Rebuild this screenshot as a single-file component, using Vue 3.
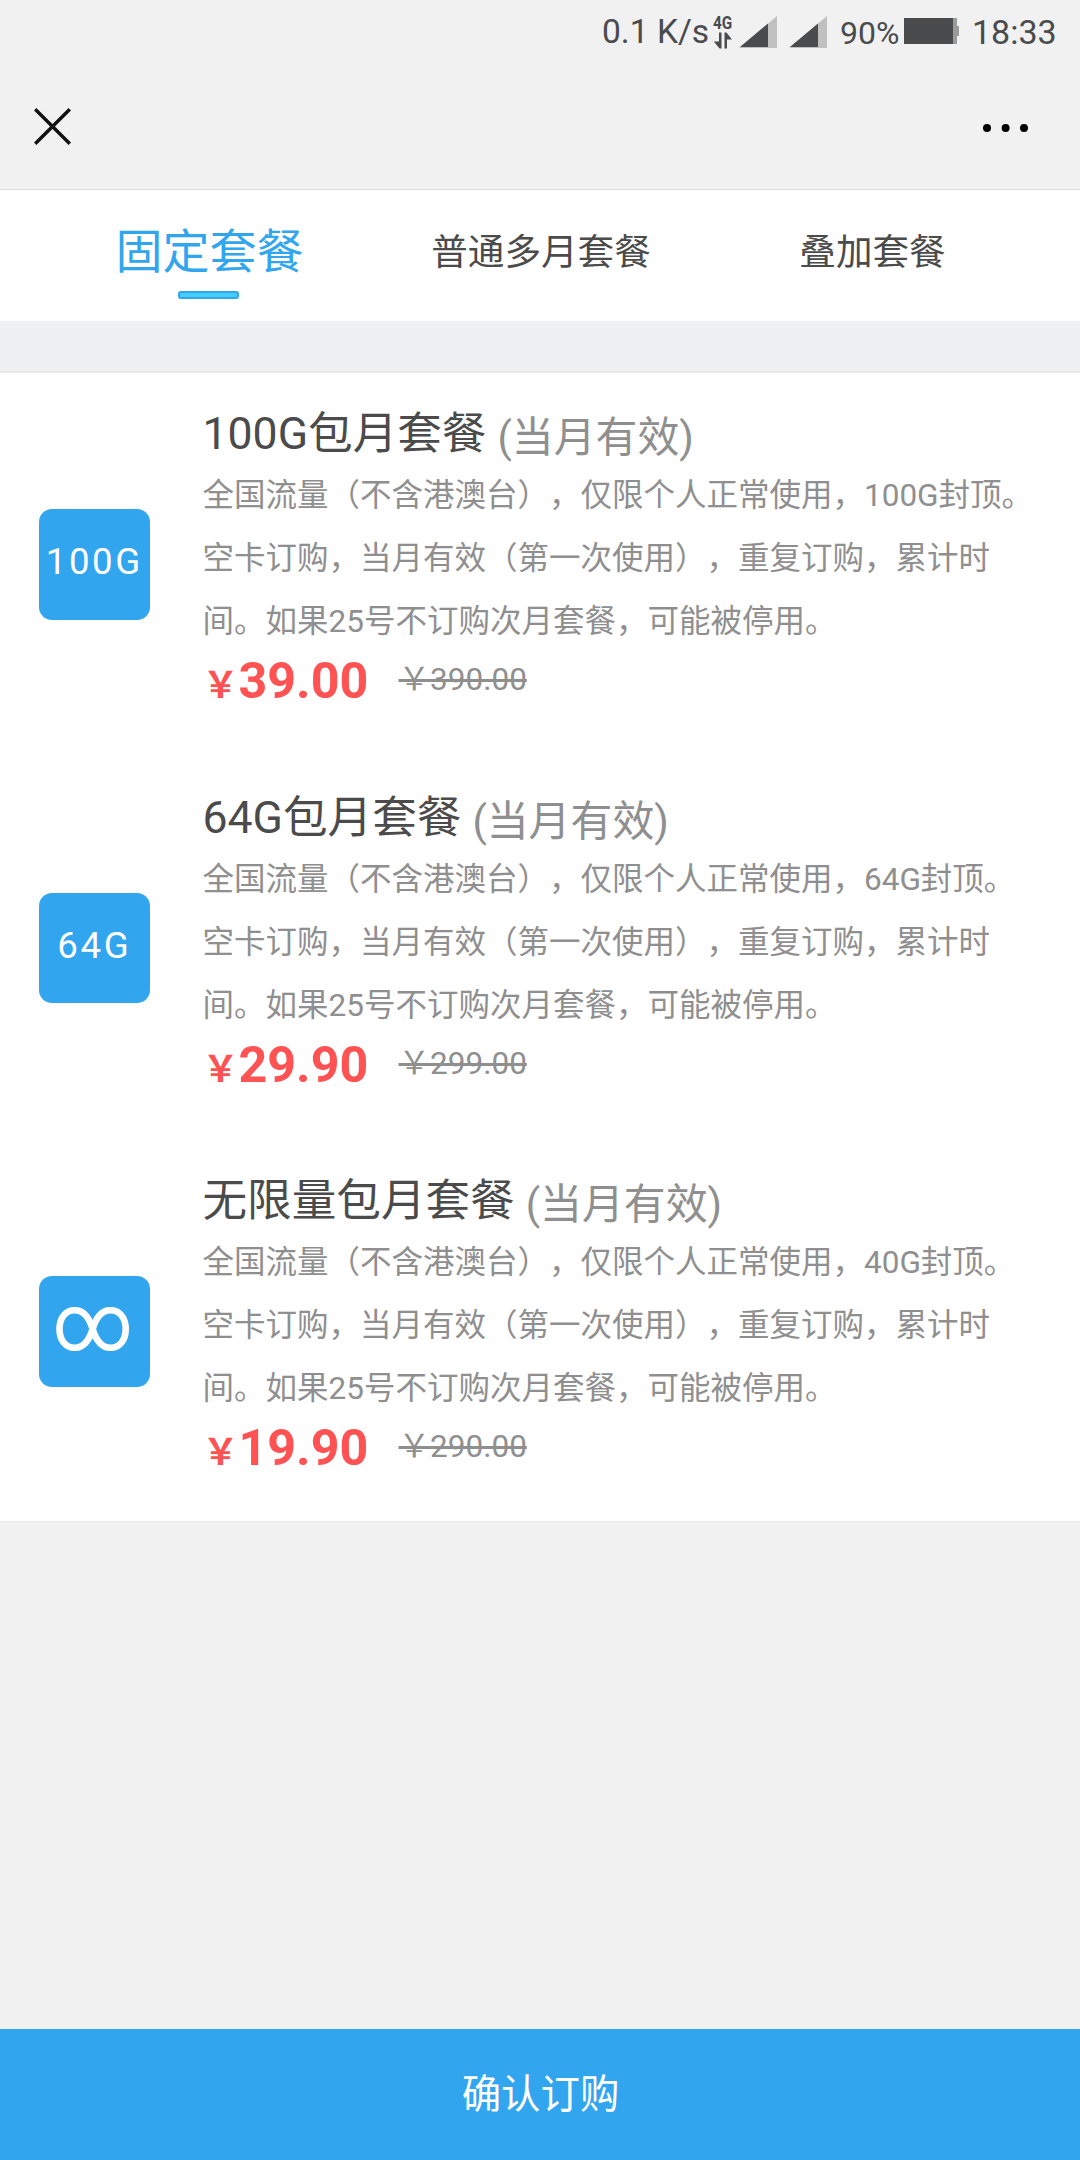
<template>
  <div class="page">
    <div class="status">
      <span class="status__speed">0.1 K/s</span>
      <div class="status__net">
        <span class="status__4g">4G</span>
        <svg width="20" height="17" viewBox="0 0 20 17">
          <path d="M8.5 0.5V16.5H6.5L0.8 9.5H6V0.5Z M11.5 16.5V0.5H13.5L19 7.5H14V16.5Z" fill="#4a4b4d" />
        </svg>
      </div>
      <svg v-for="n in 2" :key="n" class="status__signal" width="38" height="32" viewBox="0 0 38 32">
        <path d="M38 0V32H0Z" fill="#c0c0c0" />
        <path d="M29 7.5V31H1Z" fill="#4a4b4d" />
      </svg>
      <span class="status__percent">90%</span>
      <svg class="status__battery" width="55" height="26" viewBox="0 0 55 26">
        <rect width="49" height="26" fill="#4a4b4d" />
        <rect x="49" width="4" height="26" fill="#9a9a9a" />
        <rect x="52" y="8" width="3" height="10" fill="#9a9a9a" />
      </svg>
      <span class="status__time">18:33</span>
    </div>

    <div class="header">
      <svg width="37" height="37" viewBox="0 0 37 37">
        <path d="M1.2 1.2L35.8 35.8M35.8 1.2L1.2 35.8" stroke="#111" stroke-width="3.4" />
      </svg>
      <svg class="header__more" width="46" height="8" viewBox="0 0 46 8">
        <circle cx="4" cy="4" r="4" />
        <circle cx="22.6" cy="4" r="4" />
        <circle cx="41" cy="4" r="4" />
      </svg>
    </div>

    <div class="tabs">
      <div
        v-for="(tab, index) in tabs"
        :key="tab"
        :class="{'tab': true, 'active': index === activeTab}"
        @click="activeTab = index"
      >
        <span class="tab__text">{{ tab }}</span>
      </div>
    </div>

    <div class="gap"></div>

    <div class="list">
      <div v-for="item in items" :key="item.title" class="item">
        <div class="item__badge">
          <svg v-if="item.unlimited" class="item__infinity" width="74" height="44" viewBox="0 0 74 44">
            <path
              d="M36.6 22C33 10 26.5 3.2 18.5 3.2C9.5 3.2 3.5 11 3.5 22S9.5 40.8 18.5 40.8C26.5 40.8 33 34 36.6 22C40.2 10 46.7 3.2 54.7 3.2C63.7 3.2 69.7 11 69.7 22S63.7 40.8 54.7 40.8C46.7 40.8 40.2 34 36.6 22Z"
              fill="none"
              stroke="#fff"
              stroke-width="6.6"
            />
          </svg>
          <span v-else>{{ item.badge }}</span>
        </div>
        <div class="item__body">
          <div class="item__title">{{ item.title }}<span class="item__note">(当月有效)</span></div>
          <div class="item__desc">{{ desc(item.limit) }}</div>
          <div class="item__price">
            <span class="item__sign">￥</span>
            <span class="item__now">{{ item.price }}</span>
            <span class="item__old">￥{{ item.oldPrice }}</span>
          </div>
        </div>
      </div>
    </div>

    <div class="submit">确认订购</div>
  </div>
</template>

<script setup>
import {ref} from 'vue';

const tabs = ['固定套餐', '普通多月套餐', '叠加套餐']
const activeTab = ref(0)

const items = [
  { title: '100G包月套餐', badge: '100G', limit: '100G', price: '39.00', oldPrice: '390.00' },
  { title: '64G包月套餐', badge: '64G', limit: '64G', price: '29.90', oldPrice: '299.00' },
  { title: '无限量包月套餐', unlimited: true, limit: '40G', price: '19.90', oldPrice: '290.00' },
]

const desc = (limit) => {
  return `全国流量（不含港澳台），仅限个人正常使用，${limit}封顶。空卡订购，当月有效（第一次使用），重复订购，累计时间。如果25号不订购次月套餐，可能被停用。`
}
</script>

<style>
body {
  margin: 0;
  background: #f1f1f1;
}
</style>

<style scoped>
.page {
  display: flex;
  flex-direction: column;
  width: 1080px;
  height: 2160px;
  font-family: Roboto, "Noto Sans CJK SC", sans-serif;
  text-spacing-trim: space-all;
  background: #f1f1f1;
  overflow: hidden;
}

.status {
  display: flex;
  align-items: flex-start;
  height: 64px;
  padding-left: 602px;
  box-sizing: border-box;
  color: #4a4b4d;
  white-space: nowrap;
}

.status__speed,
.status__time {
  font-size: 34px;
  line-height: 40px;
  margin-top: 12px;
}

.status__speed {
  width: 111px;
  font-size: 33.6px;
}

.status__net {
  display: flex;
  flex-direction: column;
  width: 26px;
  padding-top: 14px;
}

.status__4g {
  height: 18px;
  font-size: 18px;
  line-height: 17px;
  font-weight: 700;
  transform: scaleX(0.85);
  transform-origin: left;
}

.status__signal {
  margin: 16px 12px 0 0;
}

.status__percent {
  width: 64px;
  margin: 14px 0 0 1px;
  font-size: 32px;
  line-height: 38px;
}

.status__battery {
  margin: 18px 13px 0 0;
}

.header {
  display: flex;
  justify-content: space-between;
  align-items: center;
  height: 126px;
  padding: 0 51px 1px 34px;
  box-sizing: border-box;
  border-bottom: 1px solid #dedede;
}

.header__more {
  margin-top: 3px;
}

.tabs {
  display: grid;
  grid-template-columns: 328px 335px 328px;
  height: 131px;
  padding-left: 45.5px;
  box-sizing: border-box;
  background: #fff;
}

.tab {
  position: relative;
  font-size: 36.6px;
  line-height: 126px;
  color: #4b4b4b;
  text-align: center;
}

.tab.active {
  font-size: 47px;
  line-height: 123px;
  color: #32a5ef;
}

.tab.active::after {
  content: '';
  position: absolute;
  left: 132.5px;
  top: 101px;
  width: 61px;
  height: 8px;
  border: 2px solid #32a5ef;
  border-radius: 3px;
  box-sizing: border-box;
  background: #42cfff;
}

.gap {
  height: 50px;
  background: #eff0f2;
}

.list {
  border-top: 2px solid #e8e9eb;
  border-bottom: 1px solid #e8e8e8;
  background: #fff;
}

.item {
  display: flex;
  height: 383.5px;
}

.item:last-child {
  height: 381px;
}

.item__badge {
  display: flex;
  align-items: center;
  justify-content: center;
  width: 110.5px;
  height: 110.5px;
  margin: 136px 53px 0 39px;
  padding-bottom: 5px;
  box-sizing: border-box;
  border-radius: 13px;
  font-size: 36.6px;
  letter-spacing: 2.6px;
  color: #fff;
  background: #32a5ef;
}

.item__infinity {
  margin-right: 3px;
}

.item__body {
  width: 834px;
  padding-top: 29px;
}

.item__title {
  display: flex;
  height: 62.4px;
  font-size: 44.6px;
  line-height: 64px;
  color: #4b4b4b;
  white-space: nowrap;
}

.item__note {
  margin-left: 11px;
  padding-top: 4px;
  font-size: 41.9px;
  color: #8f8f8f;
}

.item__desc {
  font-size: 31.5px;
  line-height: 63px;
  color: #8f8f8f;
}

.item__price {
  display: flex;
  align-items: baseline;
  height: 60px;
  padding-top: 3px;
}

.item__sign {
  font-size: 36px;
  font-weight: 700;
  line-height: 50px;
  color: #ff5353;
}

.item__now {
  width: 160px;
  font-size: 50.2px;
  font-weight: 700;
  line-height: 50px;
  color: #ff5353;
}

.item__old {
  position: relative;
  top: -8px;
  font-size: 31.5px;
  line-height: 40px;
  text-decoration: line-through;
  color: #8f8f8f;
}

.submit {
  height: 131px;
  margin-top: auto;
  font-size: 39.4px;
  line-height: 131px;
  text-align: center;
  text-indent: 1px;
  color: #fff;
  background: #32a5ef;
}
</style>
